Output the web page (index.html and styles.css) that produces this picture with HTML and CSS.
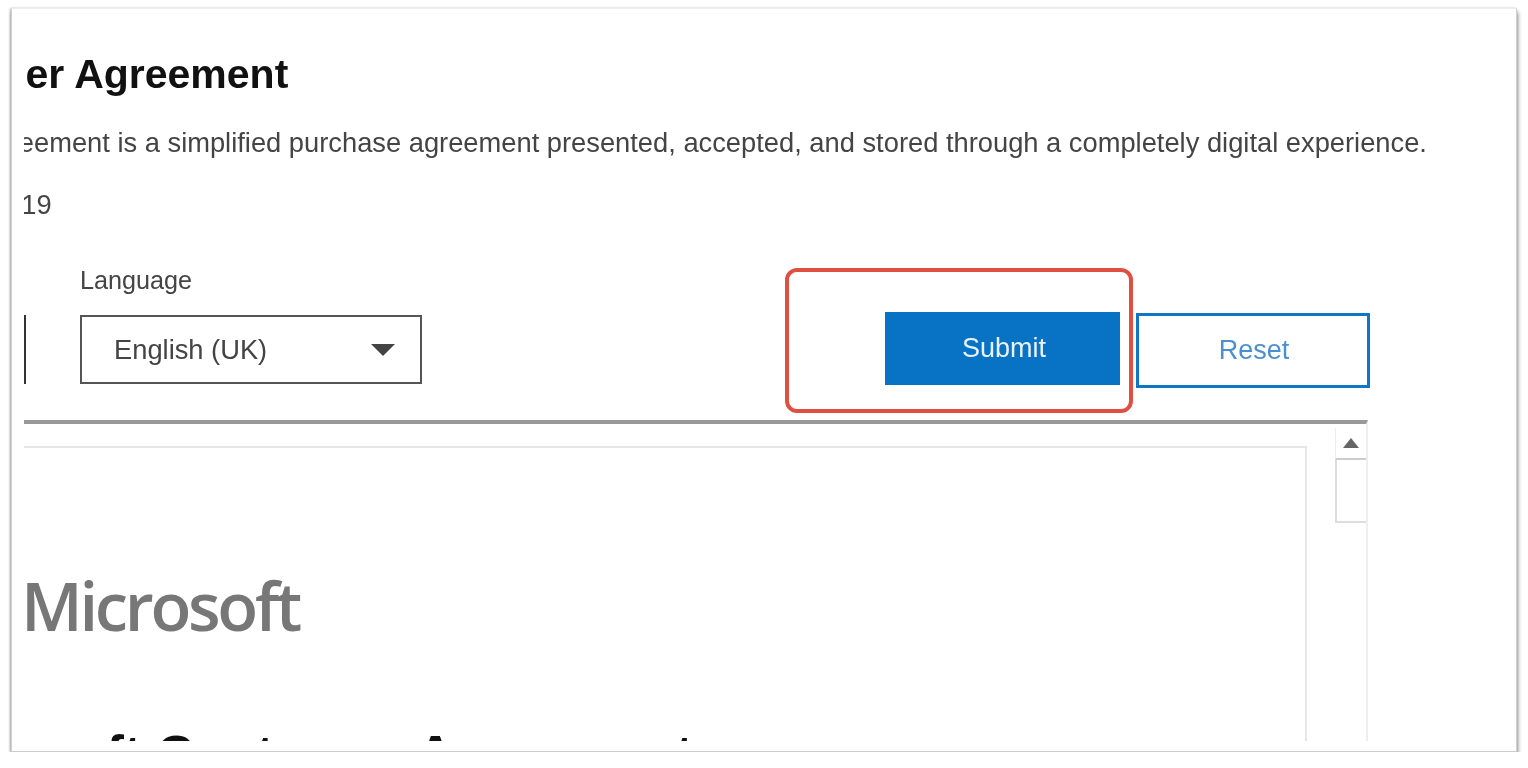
FILE: index.html
```html
<!doctype html>
<html lang="en">
<head>
	<meta charset="UTF-8">
	<title>Microsoft Customer Agreement</title>
	<link rel="stylesheet" href="styles.css">
</head>
<body>
	<div class="shot">
		<div class="clip">
			<h1 class="title">Microsoft Customer Agreement</h1>
			<p class="intro">The Microsoft Customer Agreement is a simplified purchase agreement presented, accepted, and stored through a completely digital experience.</p>
			<p class="date">2019</p>
			<div class="controls">
				<div class="stub"></div>
				<div class="lang">
					<div class="lang-label">Language</div>
					<div class="select">
						<span>English (UK)</span>
						<i class="caret"></i>
					</div>
				</div>
				<div class="buttons">
					<div class="btn submit">Submit</div>
					<div class="btn reset">Reset</div>
				</div>
			</div>
			<div class="viewer">
				<div class="doc">
					<div class="page">
						<div class="logo">Microsoft</div>
						<div class="doc-title">Microsoft Customer Agreement</div>
					</div>
				</div>
				<div class="scrollbar">
					<div class="scroll-up"><i class="up"></i></div>
					<div class="thumb"></div>
				</div>
			</div>
		</div>
		<div class="callout"></div>
	</div>
</body>
</html>
```

FILE: styles.css
```css
body{
	margin:0;
	background:#fff;
	font-family:"Liberation Sans",Arial,sans-serif;
	overflow:hidden;
}
.shot{
	position:relative;
	box-sizing:border-box;
	width:1506px;
	height:744px;
	margin:8px 0 0 11px;
	padding:40px 0 0 12px;
	background:#fff;
	border:1px solid #d0d0d0;
	border-top-color:#eee;
	border-bottom-color:#ccc;
	box-shadow:1px 4px 4px rgba(0,0,0,.45),-1px 0 2px rgba(0,0,0,.25);
}
.clip{
	width:1480px;
	height:692px;
	overflow:hidden;
	filter:blur(.7px);
}
.title{
	margin:0 0 29px -347px;
	font-size:41px;
	line-height:50px;
	font-weight:bold;
	color:#111;
	white-space:nowrap;
}
.intro{
	margin:0 0 32px -345px;
	font-size:27.3px;
	line-height:30px;
	color:#444;
	white-space:nowrap;
}
.date{
	margin:0 0 45px -33px;
	font-size:27.3px;
	line-height:30px;
	color:#444;
}
.controls{
	display:flex;
	align-items:flex-start;
	width:1346px;
	height:155px;
}
.stub{
	width:2px;
	height:69px;
	margin-top:50px;
	background:#333;
}
.lang{
	margin-left:54px;
}
.lang-label{
	height:50px;
	font-size:25.2px;
	line-height:30px;
	color:#444;
}
.select{
	box-sizing:border-box;
	display:flex;
	align-items:center;
	justify-content:space-between;
	width:342px;
	height:69px;
	padding:0 25px 0 32px;
	border:2px solid #555;
	font-size:27.3px;
	color:#444;
}
.caret{
	width:0;
	height:0;
	border-left:12px solid transparent;
	border-right:12px solid transparent;
	border-top:12px solid #444;
}
.buttons{
	display:flex;
	align-items:flex-start;
	gap:16px;
	margin:47px 0 0 auto;
}
.btn{
	box-sizing:border-box;
	display:flex;
	align-items:center;
	justify-content:center;
	font-size:27px;
}
.submit{
	width:235px;
	height:73px;
	padding-left:3px;
	background:#0873c4;
	color:#e8f2fa;
}
.reset{
	width:234px;
	height:75px;
	margin-top:1px;
	padding-left:2px;
	border:3px solid #0f76c6;
	color:#4a8fd0;
}
.viewer{
	display:flex;
	width:1344px;
	height:321px;
	border-top:4px solid #999;
	border-right:2px solid #eee;
	box-sizing:border-box;
}
.doc{
	flex:1;
	padding-top:22px;
}
.page{
	box-sizing:border-box;
	width:1283px;
	height:320px;
	border-top:2px solid #e6e6e6;
	border-right:2px solid #e6e6e6;
	overflow:hidden;
}
.logo{
	margin:117px 0 0 -3px;
	font-family:"Open Sans",sans-serif;
	font-weight:600;
	font-size:67px;
	line-height:80px;
	letter-spacing:-3.3px;
	color:#777;
}
.doc-title{
	margin:80px 0 0 -121px;
	font-size:53px;
	line-height:60px;
	font-weight:bold;
	color:#111;
	white-space:nowrap;
}
.scrollbar{
	box-sizing:border-box;
	width:31px;
	padding-top:4px;
}
.scroll-up{
	box-sizing:border-box;
	display:flex;
	align-items:center;
	justify-content:center;
	height:32px;
	border-bottom:2px solid #ccc;
	border-left:1px solid #eee;
}
.up{
	width:0;
	height:0;
	border-left:8px solid transparent;
	border-right:8px solid transparent;
	border-bottom:10px solid #666;
}
.thumb{
	box-sizing:border-box;
	height:63px;
	border-left:2px solid #ddd;
	border-bottom:2px solid #ddd;
}
.callout{
	position:absolute;
	left:773px;
	top:259px;
	box-sizing:border-box;
	width:348px;
	height:145px;
	border:4px solid #e05040;
	border-radius:12px;
}
```
